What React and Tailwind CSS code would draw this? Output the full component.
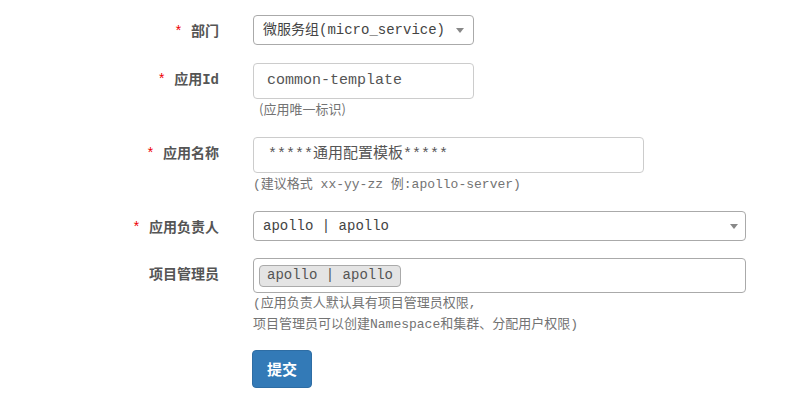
import React from "react";

const font = "font-['Liberation_Mono','Noto_Sans_CJK_SC',monospace]";

function Label({ required, children }) {
  return (
    <div className="w-[219px] shrink-0 pt-[7px] text-right text-[14px] leading-[20px] font-bold text-[#555]">
      {required && <span className="text-[#e00] font-normal">* </span>}
      {children}
    </div>
  );
}

function Arrow() {
  return (
    <span className="w-0 h-0 border-l-[4px] border-r-[4px] border-t-[5px] border-l-transparent border-r-transparent border-t-[#888]" />
  );
}

export default function App() {
  return (
    <div className={`w-[804px] h-[396px] bg-white ${font} text-[#444]`}>
      <div className="pt-[15px]">
        {/* 部门 */}
        <div className="flex items-start">
          <Label required>部门</Label>
          <div className="ml-[34px] w-[221px] h-[30px] border border-[#aaa] rounded-[4px] flex items-center justify-between pl-[9px] pr-[9px] text-[14px]">
            <span>微服务组(micro_service)</span>
            <Arrow />
          </div>
        </div>

        {/* 应用Id */}
        <div className="flex items-start mt-[18px]">
          <Label required>应用Id</Label>
          <div className="ml-[34px]">
            <div className="w-[221px] h-[36px] border border-[#ccc] rounded-[4px] flex items-center pl-[13px] text-[15px] text-[#555]">
              common-template
            </div>
            <div className="mt-[1px] pl-[6px] text-[13px] leading-[18px] text-[#737373] font-['Noto_Sans_CJK_SC',sans-serif]">
              (应用唯一标识)
            </div>
          </div>
        </div>

        {/* 应用名称 */}
        <div className="flex items-start mt-[19px]">
          <Label required>应用名称</Label>
          <div className="ml-[34px]">
            <div className="w-[391px] h-[36px] border border-[#ccc] rounded-[4px] flex items-center pl-[14px] text-[15px] text-[#555]">
              *****通用配置模板*****
            </div>
            <div className="mt-[3px] text-[13px] leading-[18px] text-[#737373]">
              (建议格式 xx-yy-zz 例:apollo-server)
            </div>
          </div>
        </div>

        {/* 应用负责人 */}
        <div className="flex items-start mt-[17px]">
          <Label required>应用负责人</Label>
          <div className="ml-[34px] w-[493px] h-[30px] border border-[#aaa] rounded-[4px] flex items-center justify-between pl-[9px] pr-[7px] text-[14px]">
            <span>apollo | apollo</span>
            <Arrow />
          </div>
        </div>

        {/* 项目管理员 */}
        <div className="flex items-start mt-[17px]">
          <Label>项目管理员</Label>
          <div className="ml-[34px]">
            <div className="w-[493px] h-[35px] border border-[#aaa] rounded-[4px] flex items-center pl-[5px]">
              <span className="h-[22px] flex items-center px-[7px] bg-[#e4e4e4] border border-[#aaa] rounded-[4px] text-[14px] text-[#555]">
                apollo | apollo
              </span>
            </div>
            <div className="text-[13px] leading-[21px] text-[#737373]">
              <div>(应用负责人默认具有项目管理员权限,</div>
              <div>项目管理员可以创建Namespace和集群、分配用户权限)</div>
            </div>
          </div>
        </div>

        {/* 提交 */}
        <div className="flex mt-[15px]">
          <div className="w-[219px] shrink-0" />
          <button className="ml-[33px] w-[60px] h-[38px] bg-[#337ab7] border border-[#2e6da4] rounded-[4px] text-white text-[15px] font-bold font-['Noto_Sans_CJK_SC',sans-serif]">
            提交
          </button>
        </div>
      </div>
    </div>
  );
}
